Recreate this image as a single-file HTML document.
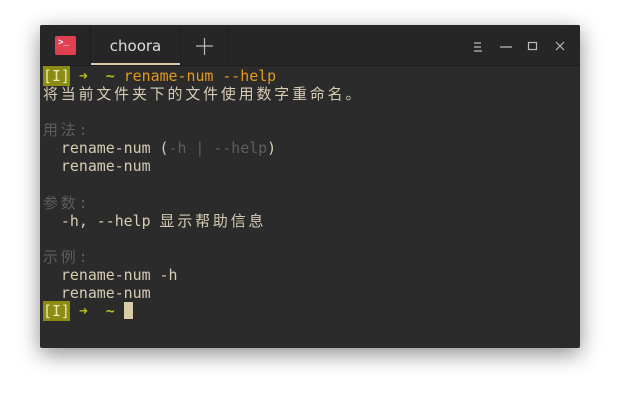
<!DOCTYPE html>
<html><head><meta charset="utf-8"><style>
html,body{margin:0;padding:0;width:620px;height:404px;background:#fff;overflow:hidden}
.win{position:absolute;left:40px;top:25px;width:540px;height:323px;background:#2b2b2b;box-shadow:0 6px 22px rgba(0,0,0,.45);border-radius:2px;overflow:hidden}
.tb{position:absolute;left:0;top:0;width:540px;height:40px;background:#262626;border-bottom:1px solid #1c1c1c}
.ic{position:absolute;left:15px;top:11px;width:21px;height:19px;background:#e04050;border-radius:2px;color:#fff;font:bold 9px "Liberation Mono",monospace;line-height:14px;padding-left:3px;box-sizing:border-box}
.tab{position:absolute;left:50px;top:0;width:89px;height:40px;border-left:1px solid #1e1e1e;border-right:1px solid #1e1e1e;color:#ddd;font:15px "DejaVu Sans",sans-serif;text-align:center;line-height:42px}
.tab:after{content:"";position:absolute;left:0;right:0;bottom:0;height:2px;background:#d8cba8}
.plus{position:absolute;left:140px;top:0;width:48px;height:40px;border-right:1px solid #1e1e1e}
.term{position:absolute;left:3px;top:42px;font:14.9px "DejaVu Sans Mono","Noto Sans CJK SC",monospace;line-height:18.1px;color:#d6ccb4;white-space:pre}
.c{letter-spacing:2.9px}
.o{color:#e69a1c}.g{color:#5e5e5e}.gr{color:#b4bd1e;font-weight:bold}
.I{background:#8c8c14;color:#e8e8b0;padding:1px 0}
.cur{display:inline-block;width:9px;height:17px;background:#d8cba8;vertical-align:-3px}
</style></head><body>
<div class="win">
<div class="tb">
<div class="ic">&gt;_</div>
<div class="tab">choora</div>
<div class="plus"><svg width="48" height="40"><path d="M16 21h17M24.5 13v17" stroke="#bbb" stroke-width="1.2"/></svg></div>
<svg style="position:absolute;left:425px;top:12px" width="110" height="20"><g stroke="#bbb" stroke-width="1.2" fill="none"><path d="M9 6h7M9 10h7M9 14h8"/><path d="M35 10h12"/><rect x="63.5" y="5.5" width="8" height="7"/><path d="M91 5l8 8M99 5l-8 8"/></g></svg>
</div>
<div class="term"><span class="I">[I]</span> <span class="gr">➜</span>  <span class="gr">~</span> <span class="o">rename-num --help</span>
<span class="c">将当前文件夹下的文件使用数字重命名。</span>

<span class="g c">用法:</span>
  rename-num (<span class="g">-h | --help</span>)
  rename-num

<span class="g c">参数:</span>
  -h, --help <span class="c">显示帮助信息</span>

<span class="g c">示例:</span>
  rename-num -h
  rename-num
<span class="I">[I]</span> <span class="gr">➜</span>  <span class="gr">~</span> <span class="cur"></span></div>
</div>
</body></html>
